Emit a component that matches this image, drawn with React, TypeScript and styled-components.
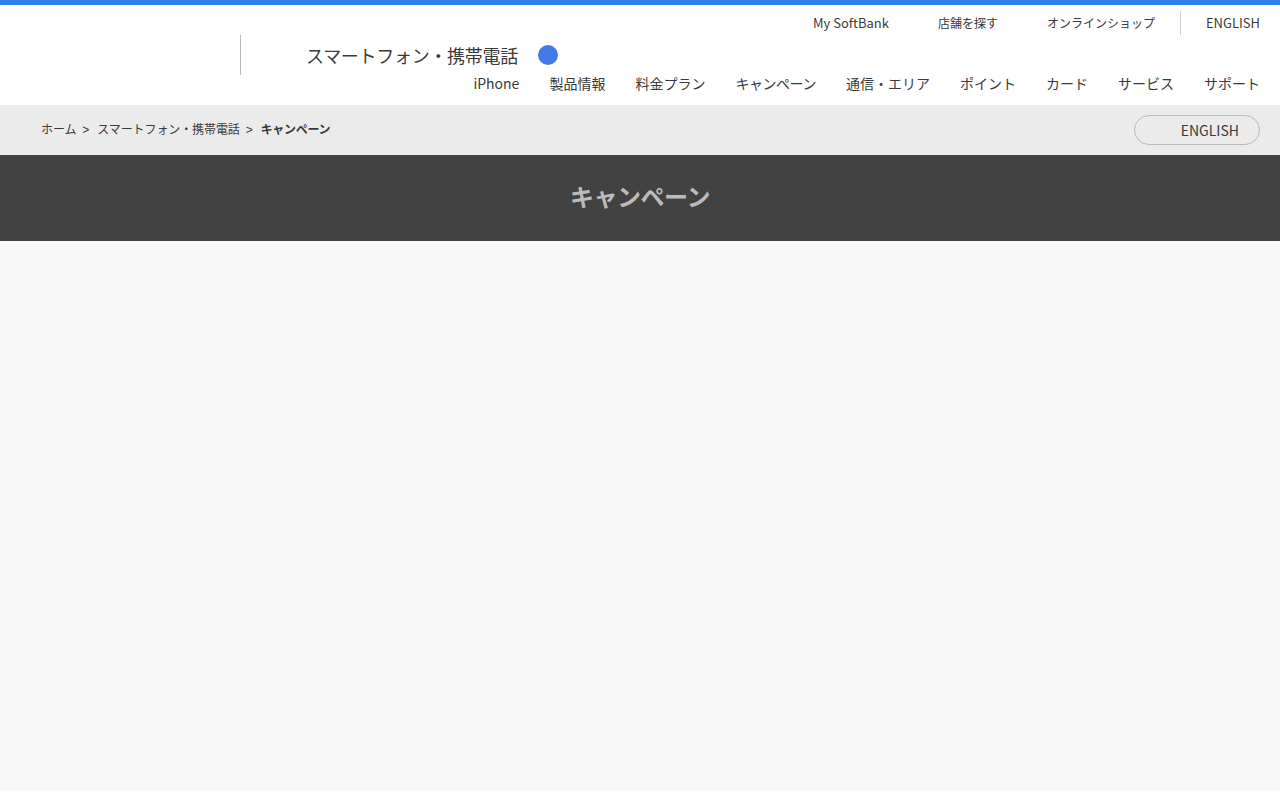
import React from "react";
import styled, { createGlobalStyle } from "styled-components";

const GlobalStyle = createGlobalStyle`
  html, body {
    margin: 0;
    padding: 0;
    background: #ffffff;
    font-family: "Noto Sans CJK JP", "Liberation Sans", sans-serif;
    color: #3a3a3a;
  }
  a {
    color: inherit;
    text-decoration: none;
  }
`;

const Page = styled.div`
  height: 791px;
  background: #f8f8f8;
  display: flex;
  flex-direction: column;
`;

const Header = styled.header`
  height: 100px;
  border-top: 5px solid #2f80ed;
  background: #ffffff;
  display: flex;
  flex-direction: column;
`;

const UtilityBar = styled.nav`
  height: 30px;
  padding-top: 6px;
  padding-right: 20px;
  box-sizing: border-box;
  display: flex;
  justify-content: flex-end;
  font-size: 12px;
`;

const UtilityLink = styled.a<{ $divided?: boolean; $latin?: boolean }>`
  height: 24px;
  line-height: 24px;
  font-size: ${(p) => (p.$latin ? "13px" : "12px")};
  margin-left: ${(p) => (p.$divided ? "25px" : "49px")};
  padding-left: ${(p) => (p.$divided ? "25px" : "0")};
  border-left: ${(p) => (p.$divided ? "1px solid #ccd3d8" : "none")};
`;

const Masthead = styled.div`
  height: 70px;
  display: flex;
`;

const LogoSlot = styled.div`
  width: 240px;
  height: 40px;
  flex: none;
  border-right: 1px solid #b8b8b8;
`;

const SiteArea = styled.div`
  flex: 1;
  display: flex;
  flex-direction: column;
  padding-right: 20px;
`;

const SiteTitleRow = styled.div`
  height: 36px;
  padding-left: 65px;
  padding-top: 8px;
  box-sizing: border-box;
  display: flex;
  align-items: flex-start;
`;

const SiteTitle = styled.span`
  font-size: 18px;
  line-height: 24px;
  letter-spacing: -0.3px;
`;

const Dot = styled.span`
  width: 20px;
  height: 20px;
  margin: 2px 0 0 20px;
  border-radius: 50%;
  background: #4479e8;
`;

const MainNav = styled.nav`
  display: flex;
  justify-content: flex-end;
  gap: 30px;
  font-size: 14px;
  line-height: 24px;
`;

const NavLink = styled.a<{ $tight?: boolean }>`
  letter-spacing: ${(p) => (p.$tight ? "-0.45px" : "0")};
`;

const Crumbs = styled.div`
  height: 50px;
  background: #ebebeb;
  padding: 0 20px 0 41px;
  display: flex;
  align-items: center;
  justify-content: space-between;
`;

const CrumbList = styled.ol`
  list-style: none;
  margin: 0 0 3px;
  padding: 0;
  display: flex;
  font-size: 12px;
`;

const Crumb = styled.li<{ $current?: boolean }>`
  font-weight: ${(p) => (p.$current ? 700 : 400)};
  letter-spacing: ${(p) => (p.$current ? "-0.3px" : "-0.1px")};

  &:not(:last-child)::after {
    content: ">";
    margin: 0 8px 0 6px;
    font-family: "Liberation Sans", sans-serif;
  }
`;

const LangButton = styled.a`
  width: 126px;
  height: 30px;
  box-sizing: border-box;
  padding-right: 20px;
  border: 1px solid #bbbbbb;
  border-radius: 15px;
  font-size: 14px;
  line-height: 28px;
  text-align: right;
`;

const TitleBand = styled.div`
  height: 86px;
  padding-bottom: 6px;
  box-sizing: border-box;
  background: #424242;
  display: flex;
  align-items: center;
  justify-content: center;
`;

const PageTitle = styled.h1`
  margin: 0;
  font-size: 24px;
  font-weight: 700;
  letter-spacing: -0.5px;
  color: #bbbbbb;
`;

const UTILITY = ["店舗を探す", "オンラインショップ"];
const NAV = ["iPhone", "製品情報", "料金プラン", "キャンペーン", "通信・エリア", "ポイント", "カード", "サービス", "サポート"];

export default function App() {
  return (
    <>
      <GlobalStyle />
      <Page>
        <Header>
          <UtilityBar>
            <UtilityLink $latin>My SoftBank</UtilityLink>
            {UTILITY.map((item) => (
              <UtilityLink key={item}>{item}</UtilityLink>
            ))}
            <UtilityLink $divided $latin>ENGLISH</UtilityLink>
          </UtilityBar>
          <Masthead>
            <LogoSlot />
            <SiteArea>
              <SiteTitleRow>
                <SiteTitle>スマートフォン・携帯電話</SiteTitle>
                <Dot />
              </SiteTitleRow>
              <MainNav>
                {NAV.map((item) => (
                  <NavLink key={item} $tight={item === "キャンペーン"}>{item}</NavLink>
                ))}
              </MainNav>
            </SiteArea>
          </Masthead>
        </Header>
        <Crumbs>
          <CrumbList>
            <Crumb>ホーム</Crumb>
            <Crumb>スマートフォン・携帯電話</Crumb>
            <Crumb $current>キャンペーン</Crumb>
          </CrumbList>
          <LangButton>ENGLISH</LangButton>
        </Crumbs>
        <TitleBand>
          <PageTitle>キャンペーン</PageTitle>
        </TitleBand>
      </Page>
    </>
  );
}
